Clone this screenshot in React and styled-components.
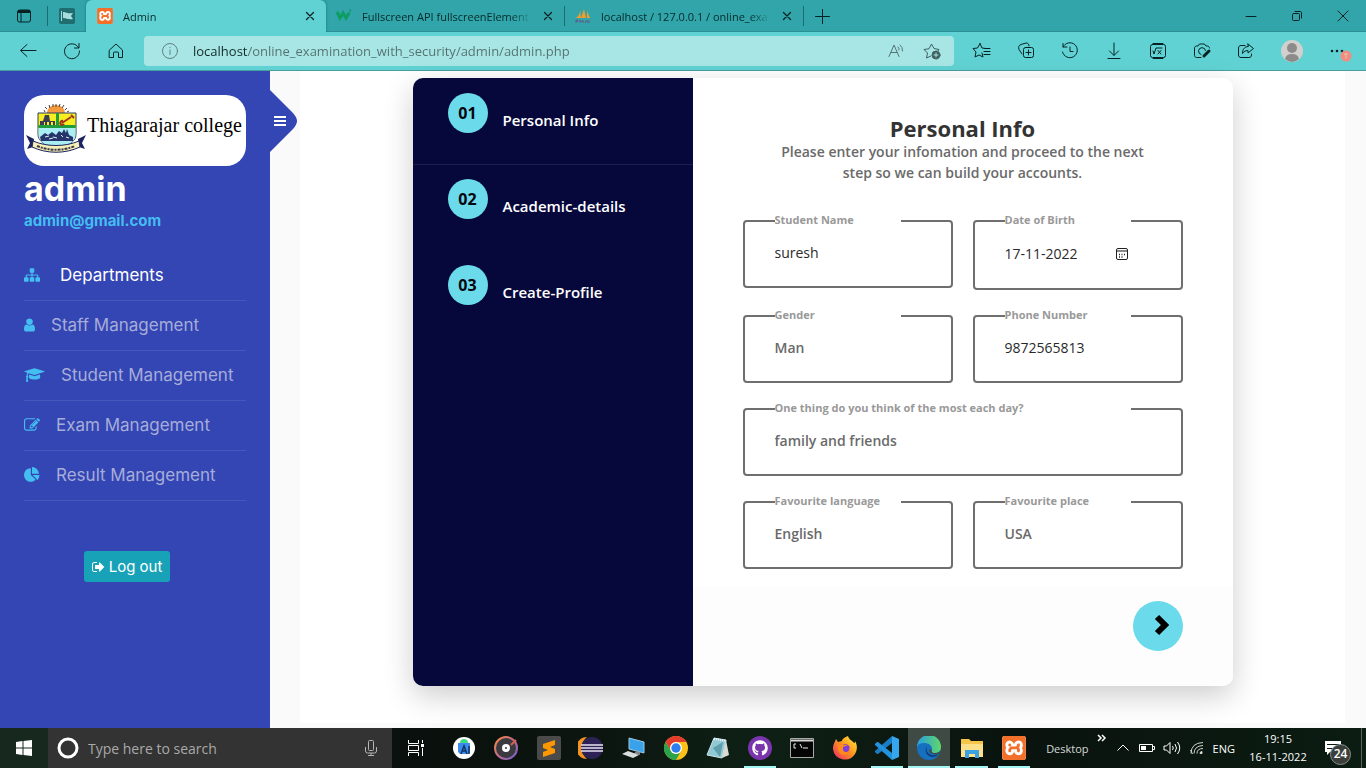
import React from "react";
import styled, { createGlobalStyle } from "styled-components";
import { FaGithub } from "react-icons/fa";
import { SiXampp } from "react-icons/si";

const ui = `"Open Sans", "Noto Sans", sans-serif`;
const side = `Inter, "Open Sans", sans-serif`;

const Global = createGlobalStyle`
  *, *::before, *::after { box-sizing: border-box; }
  body { margin: 0; font-family: ${ui}; background: #fafafa; }
  button, input { font: inherit; }
  svg { display: block; }
`;

const Screen = styled.div`
  min-height: 100vh;
  display: flex;
  flex-direction: column;
`;

const BareButton = styled.button`
  display: flex;
  align-items: center;
  justify-content: center;
  flex: none;
  padding: 0;
  border: 0;
  background: none;
  color: ${(p) => p.$color || "#062224"};
  width: ${(p) => p.$w || 44}px;
  height: 100%;
  cursor: pointer;
`;

/* ---------- browser chrome ---------- */

const TabStrip = styled.div`
  display: flex;
  align-items: center;
  height: 32px;
  background: #31a5a9;
  box-shadow: inset 0 -1px 0 #2b8f93;
`;

const Divider = styled.span`
  flex: none;
  width: 1px;
  height: 20px;
  background: #1c6d70;
`;

const Tab = styled.div`
  display: flex;
  align-items: center;
  gap: 10px;
  flex: 0 1 238px;
  min-width: 0;
  height: 100%;
  padding: 0 9px 0 10px;
  font-size: 11px;
  color: #06292b;
  ${(p) =>
    p.$active &&
    `flex-basis: 240px; padding-left: 11px; background: #61d2d3; border-radius: 6px 6px 0 0; box-shadow: 0 0 3px #1c7679; clip-path: inset(0 -3px 0 -3px);`}
`;

const TabTitle = styled.span`
  flex: 1;
  min-width: 0;
  white-space: nowrap;
  mask-image: linear-gradient(90deg, #000 calc(100% - 20px), transparent);
`;

const Spacer = styled.span`
  flex: 1;
`;

const Toolbar = styled.div`
  display: flex;
  align-items: center;
  height: 39px;
  padding-left: 6px;
  padding-right: 6px;
  background: #61d2d3;
  border-bottom: 1px solid #479fa0;
`;

const AddressBar = styled.div`
  display: flex;
  align-items: center;
  flex: 1;
  height: 30px;
  margin: 0 6px;
  padding: 0 4px 0 17px;
  border-radius: 4px;
  background: #a8e6e5;
`;

const AddressInput = styled.input`
  flex: 1;
  min-width: 0;
  margin-left: 14px;
  padding: 0;
  border: 0;
  outline: 0;
  font-size: 13px;
  color: transparent;
  background: linear-gradient(90deg, #12292a 55px, #53706f 55px);
  background-clip: text;
  -webkit-background-clip: text;
`;

/* ---------- page ---------- */

const Page = styled.div`
  flex: 1;
  display: flex;
  background: #fafafa;
`;

const Sidebar = styled.aside`
  position: relative;
  flex: none;
  width: 270px;
  padding: 24px;
  background: #3445b4;
  font-family: ${side};
`;

const Toggle = styled.button`
  position: absolute;
  left: 100%;
  top: 19px;
  padding: 0;
  border: 0;
  background: none;
  cursor: pointer;
`;

const LogoCard = styled.div`
  display: flex;
  align-items: flex-start;
  height: 71px;
  padding: 9px 0 0 1px;
  border-radius: 20px;
  background: #fff;
`;

const LogoText = styled.span`
  font: 20px/42px "Liberation Serif", serif;
  white-space: nowrap;
  color: #000;
`;

const UserName = styled.h1`
  margin: 4px 0 0;
  font-size: 34px;
  font-weight: 700;
  line-height: 38px;
  color: #fff;
`;

const UserMail = styled.p`
  margin: 4px 0 0;
  font-size: 15px;
  font-weight: 700;
  line-height: 18px;
  color: #44bef1;
`;

const Nav = styled.nav`
  display: flex;
  flex-direction: column;
  margin-top: 21px;
`;

const NavLink = styled.a`
  display: flex;
  align-items: center;
  gap: ${(p) => p.$gap || 16}px;
  height: 50px;
  padding-bottom: 1px;
  border-bottom: 1px solid rgba(255, 255, 255, 0.1);
  font-size: 17px;
  white-space: nowrap;
  text-decoration: none;
  color: ${(p) => (p.$active ? "#fff" : "#a6add9")};
  svg { flex: none; color: #44bef1; }
`;

const Logout = styled.button`
  display: flex;
  align-items: center;
  justify-content: center;
  gap: 4px;
  width: 86px;
  height: 31px;
  margin: 50px 0 0 60px;
  padding: 0;
  border: 0;
  border-radius: 3px;
  background: #17a2b8;
  color: #fff;
  font-size: 15px;
  white-space: nowrap;
`;

const Content = styled.main`
  flex: 1;
  min-width: 0;
  margin: 0 21px 5px 30px;
  padding: 7px 20px 20px;
  background: #fff;
`;

const Card = styled.section`
  display: flex;
  max-width: 820px;
  margin: 0 auto;
  border-radius: 10px;
  overflow: hidden;
  background: #fff;
  box-shadow: 0 10px 30px rgba(0, 0, 0, 0.2);
`;

const Steps = styled.ol`
  flex: none;
  width: 280px;
  margin: 0;
  padding: 0;
  list-style: none;
  background: #06083b;
`;

const Step = styled.li`
  display: flex;
  gap: 15px;
  height: 86px;
  padding: 15px 35px;
  ${(p) => p.$active && `box-shadow: 0 1px 0 #1c1e4d;`}
`;

const StepNumber = styled.span`
  flex: none;
  width: 40px;
  height: 40px;
  border-radius: 50%;
  background: #6bdaea;
  color: #06060f;
  font-size: 16px;
  font-weight: 700;
  line-height: 40px;
  text-align: center;
`;

const StepLabel = styled.span`
  padding-top: 16px;
  font-size: 15px;
  font-weight: 600;
  line-height: 22px;
  white-space: nowrap;
  color: #fff;
`;

const Form = styled.form`
  flex: 1;
  min-width: 0;
  display: flex;
  flex-direction: column;
`;

const FormBody = styled.div`
  padding: 37px 50px 18px;
`;

const Title = styled.h2`
  margin: 0;
  font-size: 22px;
  font-weight: 700;
  line-height: 26px;
  text-align: center;
  color: #333;
`;

const Intro = styled.p`
  max-width: 380px;
  margin: 0 auto 37px;
  font-size: 14px;
  font-weight: 600;
  line-height: 21px;
  text-align: center;
  color: #6a6a6a;
`;

const Fields = styled.div`
  display: grid;
  grid-template-columns: 1fr 1fr;
  align-items: start;
  gap: 25px 20px;
`;

const Field = styled.div`
  position: relative;
  display: flex;
  align-items: center;
  grid-column: ${(p) => (p.$wide ? "1 / -1" : "auto")};
  height: ${(p) => (p.$date ? 70 : 68)}px;
  padding: 0 50px 3px 30px;
  border: 2px solid #6f6f6f;
  border-radius: 4px;
`;

const FieldLabel = styled.label`
  position: absolute;
  left: 30px;
  right: 50px;
  top: -9px;
  font-size: 11px;
  font-weight: 700;
  line-height: 14px;
  white-space: nowrap;
  background: #fff;
  color: #999;
`;

const FieldInput = styled.input`
  flex: 1;
  width: 100%;
  min-width: 0;
  height: 24px;
  padding: 0;
  border: 0;
  outline: 0;
  background: none;
  font-size: 14px;
  font-weight: ${(p) => (p.$filled ? 500 : 600)};
  color: ${(p) => (p.$filled ? "#2a2a2a" : "#6a6a6a")};
`;

const FormFooter = styled.div`
  display: flex;
  justify-content: flex-end;
  padding: 14px 50px 35px;
  background: #fdfdfd;
`;

const NextButton = styled.button`
  display: flex;
  align-items: center;
  justify-content: center;
  width: 50px;
  height: 50px;
  padding: 0 0 0 10px;
  border: 0;
  border-radius: 50%;
  background: #6bdaea;
`;

/* ---------- taskbar ---------- */

const Taskbar = styled.footer`
  display: flex;
  align-items: center;
  height: 40px;
  background: linear-gradient(90deg, #17281e 0, #17281e 48px, #0a100d 30%, #0c1610 45%, #0e2015 55%, #0a130e 75%, #0b1c12 100%);
  color: #fff;
  font-size: 11px;
`;

const SearchBox = styled.label`
  display: flex;
  align-items: center;
  flex: 0 1 344px;
  height: 40px;
  padding: 0 14px 0 9px;
  background: #333;
`;

const SearchInput = styled.input`
  flex: 1;
  min-width: 0;
  margin-left: 9px;
  padding: 0;
  border: 0;
  outline: 0;
  background: none;
  font-size: 14px;
  color: #fff;
  &::placeholder { color: #a9a9a9; opacity: 1; }
`;

const Apps = styled.div`
  display: flex;
  flex: none;
  width: 592px;
  height: 40px;
  margin-left: 3px;
`;

const AppButton = styled(BareButton)`
  position: relative;
  flex: 1;
  background: ${(p) => (p.$current ? "#3f4a44" : "none")};
  ${(p) =>
    p.$open &&
    `&::after {
      content: "";
      position: absolute;
      left: ${p.$current ? 0 : 5}px;
      right: ${p.$current ? 0 : 5}px;
      bottom: 0;
      height: 2px;
      background: #a5f5f5;
    }`}
`;

const Tray = styled.div`
  display: flex;
  align-items: center;
  gap: 8px;
  height: 40px;
  margin-left: auto;
`;

const TrayText = styled.span`
  color: ${(p) => (p.$dim ? "#d6d9d7" : "#fff")};
`;

const Clock = styled.time`
  width: 70px;
  text-align: center;
  line-height: 18px;
`;

const Badge = styled.span`
  position: absolute;
  right: -6px;
  bottom: -8px;
  width: 21px;
  height: 21px;
  border: 1px solid #8a8f8c;
  border-radius: 50%;
  background: #3a3f3c;
  font-size: 12px;
  font-weight: 600;
  line-height: 18px;
  text-align: center;
`;

const Notices = styled.button`
  position: relative;
  width: 20px;
  height: 18px;
  margin-left: 4px;
  padding: 0;
  border: 0;
  background: none;
  color: #fff;
`;

const ShowDesktop = styled.button`
  width: 5px;
  height: 40px;
  margin-left: 8px;
  padding: 0;
  border: 0;
  border-left: 1px solid #5a635e;
  background: none;
`;

/* ---------- icons ---------- */

const Line = ({ size = 20, box = 20, sw = 1, children }) => (
  <svg width={size} height={size} viewBox={`0 0 ${box} ${box}`} fill="none" stroke="currentColor" strokeWidth={sw} strokeLinecap="round" strokeLinejoin="round" aria-hidden="true">
    {children}
  </svg>
);

const Awesome = ({ w, size = 16, d }) => (
  <svg width={Math.round((w / 1792) * size)} height={size} viewBox={`0 0 ${w} 1792`} fill="currentColor" aria-hidden="true">
    <path d={d} />
  </svg>
);

const fa = {
  sitemap: "M1792 1248v320q0 40-28 68t-68 28h-320q-40 0-68-28t-28-68v-320q0-40 28-68t68-28h96v-192h-512v192h96q40 0 68 28t28 68v320q0 40-28 68t-68 28h-320q-40 0-68-28t-28-68v-320q0-40 28-68t68-28h96v-192h-512v192h96q40 0 68 28t28 68v320q0 40-28 68t-68 28h-320q-40 0-68-28t-28-68v-320q0-40 28-68t68-28h96v-192q0-52 38-90t90-38h512v-192h-96q-40 0-68-28t-28-68v-320q0-40 28-68t68-28h320q40 0 68 28t28 68v320q0 40-28 68t-68 28h-96v192h512q52 0 90 38t38 90v192h96q40 0 68 28t28 68z",
  user: "M1280 1399q0 109-62.5 187t-150.5 78h-854q-88 0-150.5-78t-62.5-187q0-85 8.5-160.5t31.5-152 58.5-131 94-89 134.5-34.5q131 128 313 128t313-128q76 0 134.5 34.5t94 89 58.5 131 31.5 152 8.5 160.5zm-256-887q0 159-112.5 271.5t-271.5 112.5-271.5-112.5-112.5-271.5 112.5-271.5 271.5-112.5 271.5 112.5 112.5 271.5z",
  cap: "M1774 836l18 316q4 69-82 128t-235 93.5-323 34.5-323-34.5-235-93.5-82-128l18-316 574 181q22 7 48 7t48-7zm530-324q0 23-22 31l-1120 352q-4 1-10 1t-10-1l-652-206q-43 34-71 111.5t-34 178.5q63 36 63 109 0 69-58 107l58 433q2 14-8 25-9 11-24 11h-192q-15 0-24-11-10-11-8-25l58-433q-58-38-58-107 0-73 65-111 11-207 98-330l-333-104q-22-8-22-31t22-31l1120-352q4-1 10-1t10 1l1120 352q22 8 22 31z",
  edit: "M888 1184l116-116-152-152-116 116v56h96v96h56zm440-720q-16-16-33 1l-350 350q-17 17-1 33t33-1l350-350q17-17 1-33zm80 594v190q0 119-84.5 203.5t-203.5 84.5h-832q-119 0-203.5-84.5t-84.5-203.5v-832q0-119 84.5-203.5t203.5-84.5h832q63 0 117 25 15 7 18 23 3 17-9 29l-49 49q-14 14-32 8-23-6-45-6h-832q-66 0-113 47t-47 113v832q0 66 47 113t113 47h832q66 0 113-47t47-113v-126q0-13 9-22l64-64q15-15 35-7t20 29zm-96-738l288 288-672 672h-288v-288zm444 132l-92 92-288-288 92-92q28-28 68-28t68 28l152 152q28 28 28 68t-28 68z",
  pie: "M768 890l546 546q-106 108-247.5 168t-298.5 60q-209 0-385.5-103t-279.5-279.5-103-385.5 103-385.5 279.5-279.5 385.5-103v762zm187 6h773q0 157-60 298.5t-168 247.5zm709-128h-768v-768q209 0 385.5 103t279.5 279.5 103 385.5z",
  out: "M640 1440q0 4 1 20t.5 26.5-3 23.5-10 19.5-20.5 6.5h-320q-119 0-203.5-84.5t-84.5-203.5v-704q0-119 84.5-203.5t203.5-84.5h320q13 0 22.5 9.5t9.5 22.5q0 4 1 20t.5 26.5-3 23.5-10 19.5-20.5 6.5h-320q-66 0-113 47t-47 113v704q0 66 47 113t113 47h312l11.5 1 11.5 3 8 5.5 7 9 2 13.5zm928-544q0 26-19 45l-544 544q-19 19-45 19t-45-19-19-45v-288h-448q-26 0-45-19t-19-45v-384q0-26 19-45t45-19h448v-288q0-26 19-45t45-19 45 19l544 544q19 19 19 45z",
};

const CloseMark = ({ size = 16, sw = 1 }) => (
  <Line size={size} box={16} sw={sw}><path d="M4 4l8 8M12 4l-8 8" /></Line>
);

const XamppBox = styled.span`
  display: flex;
  flex: none;
  border-radius: 3px;
  background: #fff;
  color: #f3702a;
`;

const Crest = () => (
  <svg width="62" height="50" viewBox="0 0 62 50" aria-hidden="true">
    <path d="M22 9a9 8 0 0 1 18 0z" fill="#f79a3e" />
    <path d="M20 8l-1-2M22 5l-2-2M25 4l-1-3M28 3V0M31 3V0M34 3l1-3M37 4l2-3M40 6l2-2M42 8l2-1" stroke="#444" strokeWidth="1" />
    <path d="M13 9h38v21c0 8-8 12-19 14-11-2-19-6-19-14z" fill="#f6ee20" stroke="#2c3b6b" />
    <path d="M13.500 21h37v3h-37z" fill="#1f9d3a" />
    <path d="M31 9h3v14h-3z" fill="#1f9d3a" />
    <path d="M13.500 24h37v7c0 5-5 9-9 10H22c-5-2-8-5-8.500-10z" fill="#a8eef4" />
    <path d="M15 21v-4h3l2-6h4l1 6h5v4h-2v-3h-2v3h-2v-3h-2v3h-2v-3h-1v3z" fill="#3c3c52" />
    <path d="M37 19l9-6M38 17a2 2 0 1 0 1 3M46 11l3 3" stroke="#a4361c" strokeWidth="2" fill="none" />
    <path d="M15 33l5-4 3 2 4-3 4 3 3-4 3 2 2-4 2 4 1-4 2 6 4 2v4H16z" fill="#26346b" />
    <path d="M20 33l4-1M28 33l4 1M36 31l2 2M41 33l3 1M24 35l4-1" stroke="#d8f6fa" />
    <path d="M1 31l8 4-1 8-6 2 3-6zM61 31l-8 4 1 8 6 2-3-6z" fill="#1c2460" />
    <path d="M8 37c14 6 32 6 46 0l1 6c-15 7-33 7-48 0z" fill="#f4efb4" stroke="#1c2460" />
    <path d="M12 42c12 5 26 5 38 0" stroke="#3a3a50" strokeWidth="2" strokeDasharray="3 1 2 1" fill="none" />
  </svg>
);

const Calendar = () => (
  <svg width="14" height="14" viewBox="0 0 14 14" fill="none" stroke="#222" aria-hidden="true">
    <rect x="1.500" y="1.500" width="11" height="11" rx="1.500" />
    <path d="M2 4h10" strokeWidth="2" stroke="#888" />
    <path d="M4 7.500h1M6.500 7.500h1M9 7.500h1M4 10h1M6.500 10h1" strokeWidth="1.500" />
  </svg>
);

const art = {
  studio: (
    <svg width="24" height="24" viewBox="0 0 24 24"><circle cx="12" cy="12" r="11" fill="#fff" /><path d="M8 7a4 4 0 0 1 8 0z" fill="#3ddc84" /><path d="M6 7h12v10l-2 1H8l-2-2z" fill="#3c8cf0" /><path d="M9 18l3-8 3 8M10 15h4M17 10v8" stroke="#12355f" strokeWidth="1.500" fill="none" /></svg>
  ),
  disc: (
    <svg width="26" height="26" viewBox="0 0 26 26"><defs><linearGradient id="ring" x1="0" y1="0" x2="1" y2="1"><stop offset="0" stopColor="#f58a3c" /><stop offset=".5" stopColor="#c76a8c" /><stop offset="1" stopColor="#6e5fd0" /></linearGradient></defs><circle cx="13" cy="13" r="11" fill="#3a3a40" stroke="url(#ring)" strokeWidth="2" /><circle cx="13" cy="13" r="4" fill="#fff" /><circle cx="13" cy="13" r="1" fill="#333" /><path d="M18 10l5-5" stroke="#d8604c" strokeWidth="2" /></svg>
  ),
  sublime: (
    <svg width="24" height="24" viewBox="0 0 24 24"><rect width="24" height="24" rx="2" fill="#4a4a4a" /><path d="M18 4v5l-5 2 5 2v4L6 21v-5l5-2-5-2V8z" fill="#ff9800" /></svg>
  ),
  eclipse: (
    <svg width="26" height="24" viewBox="0 0 26 24"><path d="M9 1a11 11 0 0 0 0 22A14 14 0 0 1 9 1z" fill="#f7941e" /><circle cx="14" cy="12" r="11" fill="#2c2255" /><path d="M3 9h22M3 12h22M3 15h22" stroke="#e6e4f2" strokeWidth="1.500" /></svg>
  ),
  remote: (
    <svg width="24" height="24" viewBox="0 0 24 24"><path d="M8 2l15 4v11L8 13z" fill="#3aa2ea" stroke="#9cc8e6" /><path d="M15 15l4 1v3l-6-1z" fill="#888" /><path d="M1 18l6-3 11 4-6 3z" fill="#d9dde0" /></svg>
  ),
  chrome: (
    <svg width="24" height="24" viewBox="0 0 24 24"><circle cx="12" cy="12" r="12" fill="#fbc116" /><path d="M1.600 6A12 12 0 0 1 22.400 6H12a6 6 0 0 0-5 9z" fill="#e33b2e" /><path d="M1.600 6A12 12 0 0 0 12 24l5-9a6 6 0 0 1-10 0z" fill="#2ba24c" /><circle cx="12" cy="12" r="6" fill="#fff" /><circle cx="12" cy="12" r="4.700" fill="#2d7ff0" /></svg>
  ),
  notepad: (
    <svg width="24" height="24" viewBox="0 0 24 24"><path d="M8 2l12 2-4 18-15-3z" fill="#8fc9d3" stroke="#cfe6ea" /><path d="M16 22l7-3-3-15z" fill="#d9dbd4" /><path d="M8 3l12 2" stroke="#eef8fa" strokeWidth="2" strokeDasharray="1 1" /><path d="M7 12l10-6-3 15z" fill="#5f9fae" /></svg>
  ),
  github: (
    <svg width="24" height="24" viewBox="0 0 24 24"><circle cx="12" cy="12" r="12" fill="#7a35ad" /><g transform="translate(4 4)" color="#fff"><FaGithub size={16} /></g></svg>
  ),
  terminal: (
    <svg width="24" height="20" viewBox="0 0 24 20"><path d="M.500.500h23v19H.500z" fill="#050505" stroke="#aaa" /><path d="M1 2.500h22" stroke="#d8d8d8" strokeWidth="2" /><path d="M6 6H4v4h2M8 7v0M8 10v0M10 6l2 4M13 10h5" stroke="#eee" fill="none" /></svg>
  ),
  firefox: (
    <svg width="24" height="24" viewBox="0 0 24 24"><defs><linearGradient id="fox" x1="1" y1="0" x2="0" y2="1"><stop offset="0" stopColor="#fff03e" /><stop offset=".45" stopColor="#ff9a1c" /><stop offset="1" stopColor="#f0206c" /></linearGradient></defs><path d="M15 0c1 4 4 4 6 7 1 0 1-1 1-2 3 5 2 10 0 13A12 12 0 0 1 0 13C0 8 2 6 3 3l2 3 4-1c0-2 3-4 6-5z" fill="url(#fox)" /><circle cx="12" cy="13" r="5" fill="#7b3ce0" /><path d="M5 9c3-2 5 0 9 0 1 2-4 1-4 3 1 3 6 2 7-1 1 5-2 8-6 8s-7-4-6-10z" fill="#ff8a1c" /><circle cx="13" cy="13" r="3" fill="#7b3ce0" /></svg>
  ),
  code: (
    <svg width="24" height="24" viewBox="0 0 24 24"><path d="M17 0v7L3 18H2l-2-2v-1z" fill="#1b7cc4" /><path d="M17 24v-7L3 6H2L0 8v1z" fill="#2292dc" /><path d="M17 0l7 3v18l-7 3z" fill="#36a7ef" /></svg>
  ),
  edge: (
    <svg width="24" height="24" viewBox="0 0 24 24"><defs><linearGradient id="wave" x1="0" y1=".5" x2="1" y2=".5"><stop offset="0" stopColor="#2a9de0" /><stop offset="1" stopColor="#5fd868" /></linearGradient></defs><circle cx="12" cy="12" r="12" fill="#1670c0" /><path d="M0 11A12 12 0 0 1 24 11c0 4-3 6-6 6-4 0-4-2-3-4 0-4-4-6-8-6-3 0-6 1-7 4z" fill="url(#wave)" /><path d="M10 10c-2 5 2 10 8 9 2 0 4-1 5-2-3 3-5 4-8 4-6-1-8-7-5-11z" fill="#0d3f7c" /><path d="M15 13c-1 2-1 4 3 4 3 0 5-1 6-3l-1 3c-4 3-11 1-11-3z" fill="#3f4a44" /></svg>
  ),
  folder: (
    <svg width="22" height="20" viewBox="0 0 22 20"><path d="M0 1h8l2 2h12v16H0z" fill="#f5c64a" /><path d="M0 6h22v13H0z" fill="#fde08a" /><path d="M4 20v-8h14v8h-4v-4H8v4z" fill="#3aa2e0" /></svg>
  ),
};

const apps = [
  ["Android Studio", art.studio],
  ["Music", art.disc],
  ["Sublime Text", art.sublime],
  ["Eclipse", art.eclipse],
  ["Remote Desktop", art.remote],
  ["Chrome", art.chrome],
  ["Notepad", art.notepad],
  ["GitHub Desktop", art.github, true],
  ["Command Prompt", art.terminal],
  ["Firefox", art.firefox],
  ["Visual Studio Code", art.code, true],
  ["Edge", art.edge, true, true],
  ["File Explorer", art.folder, true],
  ["XAMPP", <XamppBox key="x"><SiXampp size={24} /></XamppBox>, true],
];

const tools = [
  ["Favorites", <path key="a" d="M8 2.500l2 4.500 4 .5M10 12l1 4-4-2-4 2 1-5-3-3.500 4.500-.5L8 2.500M12 10.500h6M12 13.500h6M13 7.500h5" />],
  ["Collections", <g key="a"><rect x="7.500" y="6.500" width="10" height="10" rx="2" /><path d="M12.500 9v5M10 11.500h5M6 13L3 8.500C2 6 3 4 5 3.500L10 2c2 0 3 1 3 3" /></g>],
  ["History", <path key="a" d="M3 2.500V6h4M3 6a7.500 7.500 0 1 1-.5 5M10 6v4.500h3" />],
  ["Downloads", <path key="a" d="M10 2v12M5.500 10l4.500 4.500 4.500-4.500M4 17.500h12" />],
  ["Math Solver", <g key="a"><rect x="2.500" y="3.500" width="15" height="13" rx="2" /><path d="M5 2.500h10M5 17.500h10M5 10l1 3 2-6h6M10 9.500l3 3.500M13 9.500L10 13" /></g>],
  ["Web capture", <g key="a"><path d="M9 16.500H4.500c-1 0-2-1-2-2V7c0-1 1-2 2-2H6l1.500-2h5L14 5h1.500c1 0 2 1 2 2M9 13.500a3.500 3.500 0 1 1 4.500-4" /><path d="M12 15l5-5" strokeWidth="3" /></g>],
  ["Share", <path key="a" d="M9 4.500H5c-1.500 0-2.500 1-2.500 2.500v7c0 1.500 1 2.500 2.500 2.500h8c1.500 0 2.500-1 2.500-2.500V13M12 3l5.500 4.500L12 12V9.500c-2.500 0-4 1-5.500 3 0-4 2-7 5.500-7z" />],
];

const menu = [
  ["Departments", "sitemap", 1792, 20],
  ["Staff Management", "user", 1280],
  ["Student Management", "cap", 2304],
  ["Exam Management", "edit", 1792],
  ["Result Management", "pie", 1792],
];

const fields = [
  { id: "name", label: "Student Name", value: "suresh", filled: true },
  { id: "dob", label: "Date of Birth", value: "17-11-2022", filled: true, date: true },
  { id: "gender", label: "Gender", value: "Man" },
  { id: "phone", label: "Phone Number", value: "9872565813", filled: true },
  { id: "thing", label: "One thing do you think of the most each day?", value: "family and friends", wide: true },
  { id: "language", label: "Favourite language", value: "English" },
  { id: "place", label: "Favourite place", value: "USA" },
];

const CalendarButton = styled.button`
  flex: none;
  padding: 0 2px 0 0;
  border: 0;
  background: none;
`;

function Browser() {
  return (
    <header>
      <TabStrip>
        <BareButton $w={47} aria-label="Tab actions">
          <svg width="16" height="16" viewBox="0 0 16 16" aria-hidden="true"><rect x="1.500" y="2" width="13" height="12" rx="2" fill="none" stroke="#062224" /><path d="M2 2h12v3H2z" fill="#062224" /><path d="M5 5v9" stroke="#062224" /></svg>
        </BareButton>
        <Divider />
        <BareButton $w={38} aria-label="Pinned tab">
          <svg width="16" height="16" viewBox="0 0 16 16"><rect width="16" height="16" rx="2" fill="#1f6d6f" /><path d="M2.500 3v10" stroke="#a6dcdc" /><path d="M4 4c4 0 3 2 10 1l-2 3 2 3c-5 1-6-1-10-1z" fill="#a6dcdc" /></svg>
        </BareButton>
        <Tab $active>
          <XamppBox><SiXampp size={16} /></XamppBox>
          <TabTitle>Admin</TabTitle>
          <BareButton $w={14} aria-label="Close tab"><CloseMark sw={1.5} /></BareButton>
        </Tab>
        <Tab>
          <svg width="16" height="16" viewBox="0 0 16 16" fill="none" stroke="#0d9d63" strokeWidth="3"><path d="M1 4l3 6 3-5 3 5 3-5" /><path d="M13 2h2l-1 1.500q1 1-1 1.500" strokeWidth="1" /></svg>
          <TabTitle>Fullscreen API fullscreenElement</TabTitle>
          <BareButton $w={14} aria-label="Close tab"><CloseMark sw={1.5} /></BareButton>
        </Tab>
        <Divider />
        <Tab>
          <svg width="16" height="16" viewBox="0 0 16 16"><path d="M1 10C4 8 5 5 5 2l1 8zM6 10l3-9 2 9zM12 10V3l3 7z" fill="#f59b2a" /><path d="M1 15v-3h2v1.500H1M5 15v-3l1.500 2L8 12v3M10 15l1.500-3 1.500 3M14 12v3" stroke="#5a5f8c" fill="none" /></svg>
          <TabTitle>localhost / 127.0.0.1 / online_exa</TabTitle>
          <BareButton $w={14} aria-label="Close tab"><CloseMark sw={1.5} /></BareButton>
        </Tab>
        <Divider />
        <BareButton $w={36} aria-label="New tab">
          <Line size={16} box={16}><path d="M8.500 1.500v14M1.500 8.500h14" /></Line>
        </BareButton>
        <Spacer />
        <BareButton $w={46} aria-label="Minimize"><Line size={12} box={12}><path d="M1 6.500h10" /></Line></BareButton>
        <BareButton $w={46} aria-label="Restore"><Line size={12} box={12}><rect x="1.500" y="3.500" width="7" height="7" rx="1" /><path d="M4 1.500h5c1 0 1.500.5 1.500 1.500v5" /></Line></BareButton>
        <BareButton $w={46} aria-label="Close"><Line size={12} box={12}><path d="M1 1l10 10M11 1L1 11" /></Line></BareButton>
      </TabStrip>
      <Toolbar>
        <BareButton aria-label="Back"><Line><path d="M18 9.500H3M9 3.500l-6.500 6L9 15.500" /></Line></BareButton>
        <BareButton aria-label="Refresh"><Line><path d="M16.500 6.500a7.500 7.500 0 1 0 1 3.500M17 2.500v4.500h-4.500" /></Line></BareButton>
        <BareButton aria-label="Home"><Line><path d="M3.500 9L10 3l6.500 6v7.500h-4V12q0-1-1-1h-3q-1 0-1 1v4.500h-4z" /></Line></BareButton>
        <AddressBar>
          <Line size={18} box={18}><g stroke="#5f8281"><circle cx="9" cy="9" r="7.500" /><path d="M9 8v4.500M9 5.500v.2" /></g></Line>
          <AddressInput aria-label="Address" defaultValue="localhost/online_examination_with_security/admin/admin.php" />
          <BareButton $w={36} $color="#527574" aria-label="Read aloud"><Line><path d="M3 15.500L8 4l5 11.500M5 11.500h6M12 6q1.500 1 1 3M14 4q3 2 2.500 6" /></Line></BareButton>
          <BareButton $w={36} $color="#41605f" aria-label="Add to favorites"><Line><path d="M9 15l-4.500 2 1-5L2 8.500l5-.7L9.500 3 12 7.500l5 1-1 1.500" /><circle cx="14" cy="14" r="4" fill="currentColor" /><path d="M14 12v4M12 14h4" stroke="#a8e6e5" /></Line></BareButton>
        </AddressBar>
        {tools.map(([name, shape]) => (
          <BareButton key={name} aria-label={name}><Line>{shape}</Line></BareButton>
        ))}
        <BareButton $w={48} aria-label="Profile">
          <svg width="22" height="22" viewBox="0 0 22 22"><circle cx="11" cy="11" r="11" fill="#d2d0ce" /><circle cx="11" cy="8" r="5" fill="#8d8b89" /><path d="M4 19q1-5 7-5t7 5q-7 6-14 0z" fill="#8d8b89" /></svg>
        </BareButton>
        <BareButton aria-label="Settings and more">
          <svg width="28" height="24" viewBox="0 0 28 24"><g fill="#062224"><circle cx="8" cy="12" r="1.300" /><circle cx="13" cy="12" r="1.300" /><circle cx="18" cy="12" r="1.300" /></g><circle cx="22" cy="17" r="5.500" fill="#f48a80" /><path d="M22 20v-6M20 16l2-2 2 2" stroke="#d9c9a6" fill="none" /></svg>
        </BareButton>
      </Toolbar>
    </header>
  );
}

function SidePanel() {
  return (
    <Sidebar>
      <Toggle aria-label="Toggle menu">
        <svg width="27" height="62" viewBox="0 0 27 62"><path d="M0 0l22 22q5 5 5 9t-5 9L0 62z" fill="#3445b4" /><path d="M4 27h12M4 31h12M4 35h12" stroke="#fff" strokeWidth="2" /></svg>
      </Toggle>
      <LogoCard>
        <Crest />
        <LogoText>Thiagarajar college</LogoText>
      </LogoCard>
      <UserName>admin</UserName>
      <UserMail>admin@gmail.com</UserMail>
      <Nav>
        {menu.map(([text, icon, w, gap], i) => (
          <NavLink key={text} href="#" $gap={gap} $active={i === 0}>
            <Awesome w={w} d={fa[icon]} />
            {text}
          </NavLink>
        ))}
      </Nav>
      <Logout type="button"><Awesome w={1664} size={14} d={fa.out} />Log out</Logout>
    </Sidebar>
  );
}

function Wizard() {
  return (
    <Card>
      <Steps>
        {["Personal Info", "Academic-details", "Create-Profile"].map((text, i) => (
          <Step key={text} $active={i === 0}>
            <StepNumber>{`0${i + 1}`}</StepNumber>
            <StepLabel>{text}</StepLabel>
          </Step>
        ))}
      </Steps>
      <Form onSubmit={(e) => e.preventDefault()}>
        <FormBody>
          <Title>Personal Info</Title>
          <Intro>Please enter your infomation and proceed to the next step so we can build your accounts.</Intro>
          <Fields>
            {fields.map((f) => (
              <Field key={f.id} $wide={f.wide} $date={f.date}>
                <FieldLabel htmlFor={f.id}>{f.label}</FieldLabel>
                <FieldInput id={f.id} defaultValue={f.value} $filled={f.filled} />
                {f.date && <CalendarButton type="button" aria-label="Pick a date"><Calendar /></CalendarButton>}
              </Field>
            ))}
          </Fields>
        </FormBody>
        <FormFooter>
          <NextButton aria-label="Next">
            <svg width="18" height="24" viewBox="0 0 18 24" fill="none" stroke="#000" strokeWidth="6"><path d="M3 3l8 8-8 8" /></svg>
          </NextButton>
        </FormFooter>
      </Form>
    </Card>
  );
}

function Bottom() {
  return (
    <Taskbar>
      <BareButton $w={48} $color="#fff" aria-label="Start">
        <svg width="16" height="16" viewBox="0 0 16 16" fill="#fff"><path d="M0 2l6.500-1v6.500H0zM7.500 1L16 0v7.500H7.500zM0 8.500h6.500V15L0 14zM7.500 8.500H16V16l-8.500-1z" /></svg>
      </BareButton>
      <SearchBox>
        <svg width="22" height="22" viewBox="0 0 22 22"><circle cx="11" cy="11" r="9" fill="none" stroke="#fff" strokeWidth="3" /></svg>
        <SearchInput placeholder="Type here to search" aria-label="Search" />
        <svg width="14" height="18" viewBox="0 0 14 18" fill="none" stroke="#b5b5b5"><rect x="4.500" y="1.500" width="5" height="10" rx="1" /><path d="M1.500 8v4q0 2 2 2h7q2 0 2-2V8M7 14v3M4 16.500h6" /></svg>
      </SearchBox>
      <BareButton $w={48} $color="#fff" aria-label="Task view">
        <svg width="18" height="16" viewBox="0 0 18 16" fill="none" stroke="#fff"><path d="M1.500 0v3.500h10V0M1.500 16v-3.500h10V16M1.500 5.500h10v5h-10zM15.500 0v3M15.500 8v8" /><path d="M14 4h3v3h-3z" fill="#fff" stroke="none" /></svg>
      </BareButton>
      <Apps>
        {apps.map(([name, picture, open, current]) => (
          <AppButton key={name} aria-label={name} $open={open} $current={current}>{picture}</AppButton>
        ))}
      </Apps>
      <Tray>
        <TrayText $dim>Desktop</TrayText>
        <svg width="10" height="28" viewBox="0 0 10 28" fill="none" stroke="#fff" strokeWidth="1.500"><path d="M1 1l3 3-3 3M5 1l3 3-3 3" /></svg>
        <svg width="16" height="16" viewBox="0 0 16 16" fill="none" stroke="#fff"><path d="M2.500 10.500L8 5l5.500 5.500" /></svg>
        <svg width="16" height="16" viewBox="0 0 16 16"><path d="M.500 4.500h13v7H.500zM14 6.500h1.500v3H14" fill="none" stroke="#fff" /><path d="M2 6h5v4H2z" fill="#fff" /></svg>
        <svg width="18" height="16" viewBox="0 0 18 16" fill="none" stroke="#fff"><path d="M1 6h2.500L7 2.500v11L3.500 10H1zM9.500 6q1.500 2 0 4M12 4q3 4 0 8M14.500 2q4.500 6 0 12" /></svg>
        <svg width="16" height="16" viewBox="0 0 16 16" fill="none" stroke="#cfd3d1"><path d="M2 13.500Q2 3 14 2.500M5 13.500Q5 6 14 5.500M8 13.500q0-5 6-5" /><path d="M11 13.500q0-2 2-2v2z" fill="#fff" /><path d="M1.500 10l2 4" /></svg>
        <TrayText>ENG</TrayText>
        <Clock>19:15<br />16-11-2022</Clock>
        <Notices aria-label="Notifications">
          <svg width="16" height="15" viewBox="0 0 16 15"><path d="M0 0h16v11H5l-3 3v-3H0z" fill="#fff" /><path d="M2 3.500h12M2 7.500h12" stroke="#0b1c12" /></svg>
          <Badge>24</Badge>
        </Notices>
        <ShowDesktop aria-label="Show desktop" />
      </Tray>
    </Taskbar>
  );
}

export default function App() {
  return (
    <Screen>
      <Global />
      <Browser />
      <Page>
        <SidePanel />
        <Content><Wizard /></Content>
      </Page>
      <Bottom />
    </Screen>
  );
}
